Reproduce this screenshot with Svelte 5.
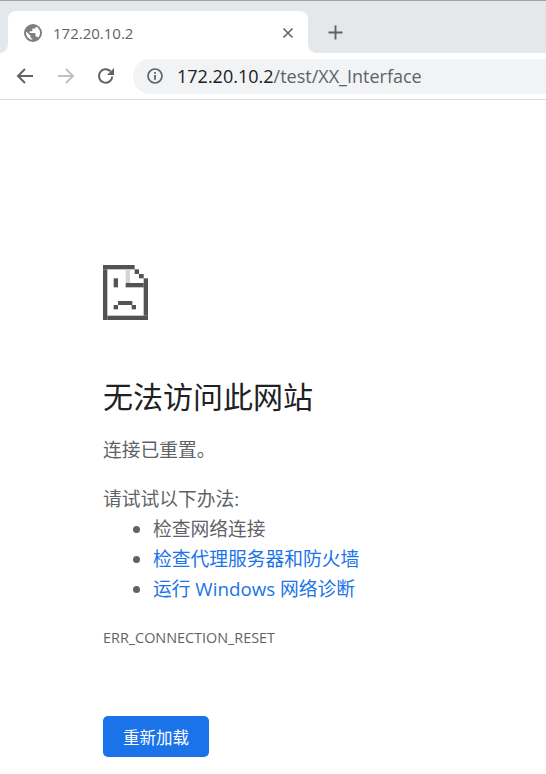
<script lang="ts">
    // sad page icon, measured in thirds of a pixel: [x, y, w, h]
    const dark: [number, number, number, number][] = [
        [0, 0, 95, 13], [0, 13, 13, 152], [13, 152, 122, 13], [122, 40, 13, 112],
        [95, 13, 13, 14], [108, 27, 14, 13],
        [68, 54, 54, 13],
        [32, 40, 13, 27],
        [45, 108, 43, 12], [32, 120, 13, 13], [86, 120, 13, 13],
    ];
</script>

<div class="browser">
    <div class="strip">
        <div class="tab">
            <svg class="favicon" viewBox="0 0 18 18">
                <path fill="#7b7f84" d="M9 0a9 9 0 1 0 0 18A9 9 0 0 0 9 0zM2 9c0-.6.1-1.100.2-1.600L6.500 11.700v1c0 1 .8 1.800 1.700 1.800v1.400A7 7 0 0 1 2 9zm12 4.800c-.2-.7-.9-1.200-1.600-1.200h-.9V10c0-.5-.4-.9-.9-.9H5.700V7.300h1.800c.5 0 .9-.4.9-.9V4.600h1.700c1 0 1.800-.8 1.800-1.700v-.4A7 7 0 0 1 14 13.800z"/>
            </svg>
            <span class="tab-title">172.20.10.2</span>
            <svg class="close" viewBox="0 0 12 12">
                <path d="M1.500 1.500l9 9M10.500 1.500l-9 9" stroke="#5f6368" stroke-width="1.600" fill="none"/>
            </svg>
        </div>
        <svg class="plus" viewBox="0 0 16 16">
            <path d="M8 .5v15M.5 8h15" stroke="#5f6368" stroke-width="2" fill="none"/>
        </svg>
    </div>
    <div class="toolbar">
        <svg class="nav" viewBox="0 0 18 18">
            <path d="M17 9H2M9 2L2 9l7 7" stroke="#5f6368" stroke-width="2" fill="none"/>
        </svg>
        <svg class="nav" viewBox="0 0 18 18">
            <path d="M1 9h15M9 2l7 7-7 7" stroke="#bdc1c6" stroke-width="2" fill="none"/>
        </svg>
        <svg class="nav" viewBox="0 0 18 18">
            <path d="M15.300 9.500a6.700 6.700 0 1 1-1.900-5.200" stroke="#5f6368" stroke-width="2" fill="none"/>
            <path d="M17 1v7h-7z" fill="#5f6368"/>
        </svg>
        <div class="omnibox">
            <svg class="info" viewBox="0 0 16 16">
                <circle cx="8" cy="8" r="7" stroke="#5f6368" stroke-width="1.700" fill="none"/>
                <path d="M7.100 7h1.800v4.800H7.100zM7.100 4h1.800v1.800H7.100z" fill="#5f6368"/>
            </svg>
            <span class="url"><span class="host">172.20.10.2</span>/test/XX_Interface</span>
        </div>
    </div>
    <main class="page">
        <svg class="sad" viewBox="0 0 135 165">
            {#each dark as [x, y, w, h]}
                <rect {x} {y} width={w} height={h} fill="#535353" />
            {/each}
            <rect x="68" y="13" width="13" height="41" fill="#d4d4d4" />
        </svg>
        <h1>无法访问此网站</h1>
        <p class="summary">连接已重置。</p>
        <p class="try">请试试以下办法:</p>
        <ul>
            <li>检查网络连接</li>
            <li><a href="#proxy">检查代理服务器和防火墙</a></li>
            <li><a href="#diagnose">运行 Windows 网络诊断</a></li>
        </ul>
        <div class="code">ERR_CONNECTION_RESET</div>
        <button type="button">重新加载</button>
    </main>
</div>

<style>
    :global(body) {
        margin: 0;
        background: #fff;
        overflow: hidden;
    }

    .browser {
        height: 774px;
        font-family: "Open Sans", "Noto Sans CJK SC", sans-serif;
        color: #5f6368;
    }

    .strip {
        display: flex;
        align-items: flex-end;
        height: 52px;
        padding-left: 8px;
        background: #e5e8eb;
        border-top: 1px solid #9fa2a6;
    }

    .tab {
        position: relative;
        display: flex;
        align-items: center;
        box-sizing: border-box;
        width: 300px;
        height: 42px;
        padding: 1px 14px 0 16px;
        background: #fff;
        border-radius: 8px 8px 0 0;
    }

    .tab::before,
    .tab::after {
        content: "";
        position: absolute;
        bottom: 0;
        width: 8px;
        height: 8px;
    }

    .tab::before {
        left: -8px;
        background: radial-gradient(circle at 0 0, transparent 7.500px, #fff 8px);
    }

    .tab::after {
        right: -8px;
        background: radial-gradient(circle at 100% 0, transparent 7.500px, #fff 8px);
    }

    .favicon {
        width: 18px;
        height: 18px;
        flex: none;
    }

    .tab-title {
        flex: 1;
        margin-left: 11px;
        font-size: 15px;
        color: #5f6368;
    }

    .close {
        width: 12px;
        height: 12px;
    }

    .plus {
        width: 15px;
        height: 15px;
        margin: 0 0 13px 20px;
    }

    .toolbar {
        display: flex;
        align-items: center;
        box-sizing: border-box;
        height: 47px;
        padding: 0 0 0 16px;
        background: #fff;
        border-bottom: 1px solid #dadce0;
    }

    .nav {
        width: 18px;
        height: 18px;
        margin-right: 23px;
        flex: none;
    }

    .nav:nth-child(3) {
        margin-left: -1px;
        margin-right: 18px;
    }

    .omnibox {
        flex: 1;
        display: flex;
        align-items: center;
        height: 35px;
        padding-left: 14px;
        background: #f1f3f4;
        border-radius: 17px 0 0 17px;
    }

    .info {
        width: 16px;
        height: 16px;
        flex: none;
    }

    .url {
        margin-left: 14px;
        font-size: 18px;
        white-space: nowrap;
        color: #5f6368;
    }

    .host {
        color: #202124;
    }

    .page {
        padding: 165px 0 0 103px;
    }

    .sad {
        display: block;
        width: 45px;
        height: 55px;
    }

    h1 {
        margin: 57px 0 0;
        font-size: 30px;
        font-weight: 400;
        line-height: 40px;
        color: #202124;
    }

    p {
        margin: 0;
        font-size: 18.750px;
        line-height: 30px;
    }

    .summary {
        margin-top: 18px;
    }

    .try {
        margin-top: 19px;
    }

    ul {
        margin: 0;
        padding-left: 50px;
        font-size: 18.750px;
        line-height: 30px;
    }

    a {
        color: #1a73e8;
        text-decoration: none;
    }

    .code {
        margin-top: 24px;
        font-size: 14.400px;
        line-height: 20px;
    }

    button {
        display: block;
        width: 106px;
        height: 41px;
        margin-top: 68px;
        padding: 0;
        border: none;
        border-radius: 5px;
        background: #1a73e8;
        color: #fff;
        font: inherit;
        font-size: 16.500px;
    }
</style>
